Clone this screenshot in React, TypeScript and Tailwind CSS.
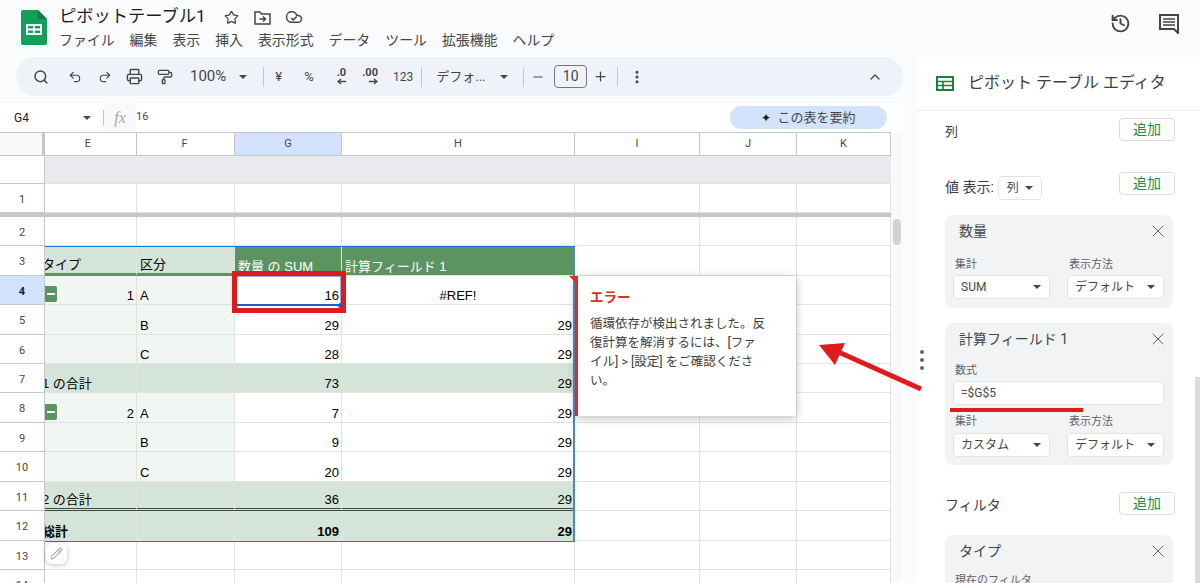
import React from 'react';
import { ChevronUp, History, Minus, MoreVertical, PaintRoller, Pencil, Plus, Printer, Redo2, Search, Star, Undo2, X } from 'lucide-react';

const FONT = 'font-["Roboto","Noto_Sans_CJK_JP",sans-serif]';
const CELL_FONT = 'font-["Liberation_Sans","Noto_Sans_CJK_JP",sans-serif]';

const Caret = ({ className = '' }: { className?: string }) => (
  <span className={`inline-block w-0 h-0 border-x-[4px] border-x-transparent border-t-[4px] border-t-[#444746] ${className}`} />
);

const Divider = () => <div className="w-px h-5 bg-[#c7c7c7] mx-1" />;

const SheetsLogo = () => (
  <svg width="26" height="35" viewBox="0 0 26 35">
    <path d="M2 0h15l9 9v24a2 2 0 0 1-2 2H2a2 2 0 0 1-2-2V2a2 2 0 0 1 2-2z" fill="#0fa15a" />
    <path d="M17 0l9 9h-9z" fill="#0b7d45" />
    <path d="M5 14h16v11H5z" fill="#fff" />
    <path d="M7 16h5v2.500H7zM14 16h5v2.500h-5zM7 20.500h5V23H7zM14 20.500h5V23h-5z" fill="#0fa15a" />
  </svg>
);

const MoveFolder = () => (
  <svg width="17" height="15" viewBox="0 0 17 15" fill="none" stroke="#444746" strokeWidth="1.500" className="ml-[15px]">
    <path d="M1 2h5l1.500 2H16v10H1z" />
    <path d="M5.500 9h5.500M9 6.500L11.500 9 9 11.500" />
  </svg>
);

const CloudSaved = () => (
  <svg width="18" height="18" viewBox="0 0 24 24" fill="none" stroke="#444746" strokeWidth="2" className="ml-[14px]">
    <path d="M17.500 19H9a7 7 0 1 1 6.710-9h1.790a4.500 4.500 0 1 1 0 9Z" />
    <path d="M8.500 13.500l2.500 2.500 4.500-4.500" />
  </svg>
);

const menus = ['ファイル', '編集', '表示', '挿入', '表示形式', 'データ', 'ツール', '拡張機能', 'ヘルプ'];

const TopBar = () => (
  <div className="h-[57px] flex items-start shrink-0 pl-[21px] pt-[10px]">
    <SheetsLogo />
    <div className="ml-[12px] -mt-[6px]">
      <div className="flex items-center h-[26px]">
        <span className="text-[17.250px] text-[#1f1f1f] w-[165px]">ピボットテーブル1</span>
        <Star className="w-[15px] h-[15px] text-[#444746]" />
        <MoveFolder />
        <CloudSaved />
      </div>
      <div className="flex gap-[15px] text-[13.900px] text-[#444746] -mt-[2px] leading-[24px]">
        {menus.map((m) => (
          <span key={m}>{m}</span>
        ))}
      </div>
    </div>
    <div className="ml-auto flex items-center gap-[28px] pr-[21px] pt-[3px]">
      <History className="w-[21px] h-[21px] text-[#444746]" strokeWidth={2.2} />
      <svg width="20" height="20" viewBox="0 0 20 20" className="text-[#444746]">
        <path d="M1 1h18v18l-4-4H1z" fill="none" stroke="currentColor" strokeWidth="2" />
        <path d="M4 5h12M4 8h12M4 11h12" stroke="currentColor" strokeWidth="1.700" />
      </svg>
    </div>
  </div>
);

// ".0" and ".00" buttons: digits with a small arrow underneath
const DecimalIcon = ({ label, dir, className = '' }: { label: string; dir: 'left' | 'right'; className?: string }) => (
  <div className={`flex flex-col items-end text-[11px] font-bold leading-[10px] ${className}`}>
    <span>{label}</span>
    <svg width="9" height="7" viewBox="0 0 9 7" fill="none" stroke="#444746" strokeWidth="1.400" className={dir === 'left' ? '' : 'rotate-180'}>
      <path d="M9 3.500H1M4 1L1 3.500 4 6" />
    </svg>
  </div>
);

const Toolbar = () => (
  <div className="h-[39px] w-[887px] ml-4 rounded-[20px] bg-[#eff3f9] flex items-center pl-[17px] pr-[20px] text-[#444746]">
    <Search className="w-[16px] h-[16px]" strokeWidth={2.2} />
    <Undo2 className="w-[14px] h-[14px] ml-[19px]" />
    <Redo2 className="w-[14px] h-[14px] ml-[16px]" />
    <Printer className="w-[17px] h-[17px] ml-[14px]" />
    <PaintRoller className="w-[16px] h-[16px] ml-[14px]" />
    <span className="text-[15px] ml-[17px]">100%</span>
    <Caret className="ml-[13px]" />
    <div className="ml-[12px]"><Divider /></div>
    <span className="text-[13px] ml-[7px]">¥</span>
    <span className="text-[13px] ml-[22px]">%</span>
    <DecimalIcon label=".0" dir="left" className="ml-[23px]" />
    <DecimalIcon label=".00" dir="right" className="ml-[16px]" />
    <span className="text-[12px] ml-[15px]">123</span>
    <div className="ml-[4px]"><Divider /></div>
    <span className="text-[13px] ml-[10px] w-[54px]">デフォ...</span>
    <Caret className="ml-[10px]" />
    <div className="ml-[11px]"><Divider /></div>
    <Minus className="w-[14px] h-[14px] ml-[3px]" />
    <div className="w-[33px] h-[23px] ml-[9px] border border-[#747775] rounded-[4px] text-[14px] flex items-center justify-center">10</div>
    <Plus className="w-[15px] h-[15px] ml-[6px]" />
    <div className="ml-[5px]"><Divider /></div>
    <MoreVertical className="w-[16px] h-[16px] ml-[7px]" strokeWidth={2.6} />
    <ChevronUp className="w-[16px] h-[16px] ml-auto" />
  </div>
);

const FormulaBar = () => (
  <div className="h-[29px] mt-[7px] bg-white flex items-center w-[903px] text-[#444746]">
    <span className="w-[83px] pl-[14px] text-[12px] text-[#1f1f1f]">G4</span>
    <Caret />
    <div className="ml-[12px] w-px h-[16px] bg-[#c7c7c7]" />
    <div className="w-[32px] h-full bg-[#f8f9fa] flex items-center justify-center text-[16px] italic text-[#a8a8a8] font-['Liberation_Serif',serif]">fx</div>
    <span className="text-[11px]">16</span>
    <div className="ml-auto mr-[16px] w-[157px] h-[23px] rounded-full bg-[#d3e3fd] flex items-center justify-center gap-[6px] text-[13px] text-[#444746]">
      <span className="text-[#1f1f1f] text-[12px]">✦</span>
      この表を要約
    </div>
  </div>
);

const columns = ['E', 'F', 'G', 'H', 'I', 'J', 'K'];

type RowDef = {
  n: number;
  kind: 'blank' | 'head' | 'item' | 'total' | 'grand';
  e?: string;
  f?: string;
  g?: string;
  h?: string;
  minus?: boolean;
};

const rows: RowDef[] = [
  { n: 1, kind: 'blank' },
  { n: 2, kind: 'blank' },
  { n: 3, kind: 'head', e: 'タイプ', f: '区分', g: '数量 の SUM', h: '計算フィールド 1' },
  { n: 4, kind: 'item', e: '1', f: 'A', g: '16', h: '#REF!', minus: true },
  { n: 5, kind: 'item', f: 'B', g: '29', h: '29' },
  { n: 6, kind: 'item', f: 'C', g: '28', h: '29' },
  { n: 7, kind: 'total', e: '1 の合計', g: '73', h: '29' },
  { n: 8, kind: 'item', e: '2', f: 'A', g: '7', h: '29', minus: true },
  { n: 9, kind: 'item', f: 'B', g: '9', h: '29' },
  { n: 10, kind: 'item', f: 'C', g: '20', h: '29' },
  { n: 11, kind: 'total', e: '2 の合計', g: '36', h: '29' },
  { n: 12, kind: 'grand', e: '総計', g: '109', h: '29' },
  { n: 13, kind: 'blank' },
  { n: 14, kind: 'blank' },
];

const LINE = 'border-r border-b border-[#e1e3e1]';
const BASE = `${LINE} overflow-hidden whitespace-nowrap flex items-end text-[13px] leading-[17px] text-black ${CELL_FONT}`;

const Row = ({ row }: { row: RowDef }) => {
  const tint =
    row.kind === 'head' || row.kind === 'total' || row.kind === 'grand'
      ? 'bg-[#d5e4d8] border-[#c3d2c6]'
      : row.kind === 'item'
        ? 'bg-[#f2f6f2]'
        : 'bg-white';
  const val =
    row.kind === 'head'
      ? 'bg-[#5b9460] text-white pl-[3px] border-[#5b9460]'
      : row.kind === 'total' || row.kind === 'grand'
        ? 'bg-[#d5e4d8] border-[#c3d2c6] justify-end pr-[2px]'
        : row.kind === 'item'
          ? 'bg-white justify-end pr-[2px]'
          : 'bg-white';
  const bold = row.kind === 'grand' ? 'font-bold' : '';
  const headRule = row.n === 3 ? 'border-b-[3px] border-b-[#5b9460]' : '';
  const doubleRule = row.n === 11 ? 'border-b-[3px] border-double border-b-[#3c4a3e]' : '';
  const active = row.n === 4;
  return (
    <>
      <div className={`border-r border-b border-[#c4c7c5] pt-[4px] flex items-center justify-center text-[11px] ${FONT} ${active ? 'bg-[#d3e3fd] font-bold text-[#041e49]' : 'bg-white text-[#444746]'}`}>
        {row.n}
      </div>
      <div className={`${BASE} ${tint} ${bold} ${headRule} ${doubleRule} relative ${row.kind === 'item' ? 'justify-end pr-[2px]' : ''}`}>
        {row.minus && (
          <span className="absolute left-0 bottom-[2px] w-[12px] h-[16px] bg-[#5b9460] rounded-r-[2px] flex items-center justify-center">
            <span className="w-[8px] h-[2px] bg-white" />
          </span>
        )}
        {row.kind === 'item' ? row.e : <span className="-ml-[3px]">{row.e}</span>}
      </div>
      <div className={`${BASE} ${tint} ${bold} ${headRule} ${doubleRule} pl-[3px]`}>{row.f}</div>
      <div className={`${BASE} ${val} ${bold} ${doubleRule}`}>{row.g}</div>
      <div className={`${BASE} ${val} ${bold} ${doubleRule} ${row.n === 4 ? 'justify-center! pr-0!' : ''}`}>{row.h}</div>
      <div className={`${LINE} bg-white`} />
      <div className={`${LINE} bg-white`} />
      <div className={`${LINE} bg-white`} />
    </>
  );
};

const Sheet = () => (
  <div className="relative flex-1 min-h-0 overflow-hidden w-[903px]">
    <div className="grid grid-cols-[45px_92px_98px_107px_233px_125px_97px_94px] grid-rows-[23px_28px_29px_4px_29px_30px_29px_30px_29px_29px_30px_29px_30px_29px_30px_29px_29px] w-[891px] border-t border-[#c4c7c5]">
      <div className="bg-[#f8f9fa] border-r-[3px] border-b border-r-[#c4c7c5] border-b-[#c4c7c5]" />
      {columns.map((c) => (
        <div
          key={c}
          className={`flex items-center justify-center border-r border-b border-[#c4c7c5] text-[11px] text-[#444746] ${FONT} ${c === 'G' ? 'bg-[#d3e3fd]' : 'bg-white'} ${c === 'E' ? 'pr-[5px]' : ''} ${c === 'F' ? 'pr-[2px]' : ''}`}
        >
          {c}
        </div>
      ))}
      <div className="bg-white border-r border-b border-[#c4c7c5]" />
      <div className="col-span-7 bg-[#e8eaed] border-b border-[#e1e3e1]" />
      <Row row={rows[0]} />
      <div className="col-span-8 bg-[#c4c7c5]" />
      {rows.slice(1).map((r) => (
        <Row key={r.n} row={r} />
      ))}
    </div>
    {/* sheet scrollbar */}
    <div className="absolute top-[1px] right-0 bottom-0 w-[12px] bg-[#f8f9fa]">
      <div className="absolute top-[86px] left-[2px] w-[8px] h-[26px] rounded-full bg-[#d0d2d3]" />
    </div>
    {/* pivot range outline */}
    <div className="absolute left-[45px] top-[114px] w-[530px] h-[296px] border-y border-r-2 border-y-[#1a73e8] border-r-[#4a86c8] pointer-events-none" />
    {/* active cell */}
    <div className="absolute left-[235px] top-[144px] w-[106px] h-[30px] border-b-2 border-b-[#1a5fc9] border-t border-x border-t-[#a6a6e8] border-x-[#a6a6e8]" />
    <div className="absolute left-[338px] top-[171px] w-[5px] h-[5px] rounded-full bg-[#1a5fc9]" />
    {/* annotation box */}
    <div className="absolute left-[232px] top-[139px] w-[114px] h-[42px] border-[5px] border-[#dc1c1c]" />
    {/* error popup */}
    <div className="absolute left-[575px] top-[144px] w-[221px] h-[140px] bg-white border-l-[3px] border-l-[#d93025] shadow-[0_2px_8px_rgba(60,64,67,0.35)] pl-[12px] pr-[30px] pt-[11px]">
      <div className={`text-[13.500px] font-bold text-[#d93025] leading-[20px] ${FONT}`}>エラー</div>
      <div className={`text-[12.500px] leading-[19px] mt-[7px] text-[#3c4043] ${FONT}`}>
        循環依存が検出されました。反復計算を解消するには、[ファイル] &gt; [設定] をご確認ください。
      </div>
    </div>
    {/* corner marker of the error cell */}
    <div className="absolute left-[569px] top-[144px] w-0 h-0 border-l-[6px] border-l-transparent border-t-[6px] border-t-[#d93025]" />
    {/* pencil chip */}
    <div className="absolute left-[46px] top-[411px] w-[21px] h-[21px] rounded-[6px] bg-white shadow-[0_1px_5px_rgba(0,0,0,0.25)] flex items-center justify-center">
      <Pencil className="w-[13px] h-[13px] text-[#a8a8a8]" />
    </div>
  </div>
);

const AddButton = ({ className = '' }: { className?: string }) => (
  <div className={`w-[56px] h-[23px] rounded-[4px] border border-[#dadce0] bg-white flex items-center justify-center text-[14px] text-[#1e8e3e] ${className}`}>追加</div>
);

const Select = ({ label, width }: { label: string; width: string }) => (
  <div className={`${width} h-[24px] rounded-[4px] bg-white border border-[#e3e3e3] flex items-center justify-between pl-[7px] pr-[8px] text-[12px] text-[#444746]`}>
    {label}
    <Caret />
  </div>
);

const Labels = () => (
  <div className="grid grid-cols-[114px_97px] text-[11px] text-[#5f6368] leading-[16px] pl-[10px]">
    <span>集計</span>
    <span>表示方法</span>
  </div>
);

const CardTitle = ({ title }: { title: string }) => (
  <div className="flex items-center justify-between pl-[14px] pr-[5px] h-[32px] text-[14px] text-[#444746]">
    {title}
    <X className="w-[20px] h-[20px] text-[#5f6368]" strokeWidth={1.2} />
  </div>
);

const Editor = () => (
  <div className="flex-1 bg-white relative overflow-hidden">
    <div className="h-[54px] pb-[1px] border-b border-[#e8eaed] flex items-center pl-[19px]">
      <svg width="18" height="15" viewBox="0 0 18 15">
        <path d="M1 1h16v13H1z" fill="none" stroke="#188038" strokeWidth="2" />
        <path d="M1 5.500h16M1 9.500h16M7 5.500V14" stroke="#188038" strokeWidth="1.600" />
      </svg>
      <span className="ml-[14px] text-[16px] text-[#3c4043]">ピボット テーブル エディタ</span>
    </div>
    <div className="pl-[28px] pr-[25px] flex flex-col">
      <div className="flex justify-between items-start mt-[7px] h-[54px] text-[13px] text-[#3c4043]">
        <span className="mt-[4px]">列</span>
        <AddButton />
      </div>
      <div className="flex justify-between items-start h-[43px] text-[14px] text-[#3c4043]">
        <div className="flex items-center mt-[4px]">
          <span className="-mt-[2px]">値 表示:</span>
          <div className="ml-[4px] w-[44px] h-[24px] rounded-[4px] border border-[#e3e3e3] flex items-center justify-center gap-[6px] text-[12px] text-[#444746]">
            列<Caret />
          </div>
        </div>
        <AddButton />
      </div>
      <div className="w-[228px] h-[93px] rounded-[8px] bg-[#f1f3f4] mb-[15px]">
        <CardTitle title="数量" />
        <div className="mt-[10px]"><Labels /></div>
        <div className="flex gap-[17px] pl-[8px] mt-[2px]">
          <Select label="SUM" width="w-[97px]" />
          <Select label="デフォルト" width="w-[97px]" />
        </div>
      </div>
      <div className="w-[228px] h-[142px] rounded-[8px] bg-[#f1f3f4]">
        <CardTitle title="計算フィールド 1" />
        <div className="text-[11px] text-[#5f6368] leading-[16px] pl-[10px] mt-[8px]">数式</div>
        <div className="ml-[8px] mt-[2px] w-[211px] h-[24px] rounded-[4px] bg-white border border-[#e3e3e3] flex items-center pl-[7px] text-[12px] text-[#444746]">=$G$5</div>
        <div className="mt-[9px]"><Labels /></div>
        <div className="flex gap-[17px] pl-[8px] mt-[3px]">
          <Select label="カスタム" width="w-[97px]" />
          <Select label="デフォルト" width="w-[97px]" />
        </div>
      </div>
      <div className="flex justify-between items-start mt-[27px] h-[43px] text-[14px] text-[#3c4043]">
        <span className="mt-[3px]">フィルタ</span>
        <AddButton />
      </div>
      <div className="w-[228px] h-[70px] rounded-[8px] bg-[#f1f3f4]">
        <CardTitle title="タイプ" />
        <div className="text-[11px] text-[#5f6368] leading-[16px] pl-[10px] mt-[6px]">現在のフィルタ</div>
      </div>
    </div>
    {/* panel scrollbar */}
    <div className="absolute right-0 top-[320px] w-[5px] h-[206px] bg-[#dadce0]" />
  </div>
);

export default function App() {
  return (
    <div className={`relative w-[1200px] h-[583px] overflow-hidden bg-[#f9fbfd] ${FONT}`}>
      <TopBar />
      <div className="flex h-[526px]">
        <div className="w-[917px] shrink-0 flex flex-col">
          <Toolbar />
          <FormulaBar />
          <Sheet />
        </div>
        <Editor />
      </div>
      {/* panel handle */}
      <div className="absolute left-[920px] top-[350px] flex flex-col gap-[4px]">
        <span className="w-[4px] h-[4px] rounded-full bg-[#5f6368]" />
        <span className="w-[4px] h-[4px] rounded-full bg-[#5f6368]" />
        <span className="w-[4px] h-[4px] rounded-full bg-[#5f6368]" />
      </div>
      {/* red annotations */}
      <svg className="absolute left-0 top-0 pointer-events-none" width="1200" height="583">
        <path d="M921 389L834 350" stroke="#e01b1b" strokeWidth="5" />
        <path d="M819 345L845 343L835 365z" fill="#e01b1b" />
        <path d="M950 410H1083" stroke="#e01b1b" strokeWidth="4" />
      </svg>
    </div>
  );
}
